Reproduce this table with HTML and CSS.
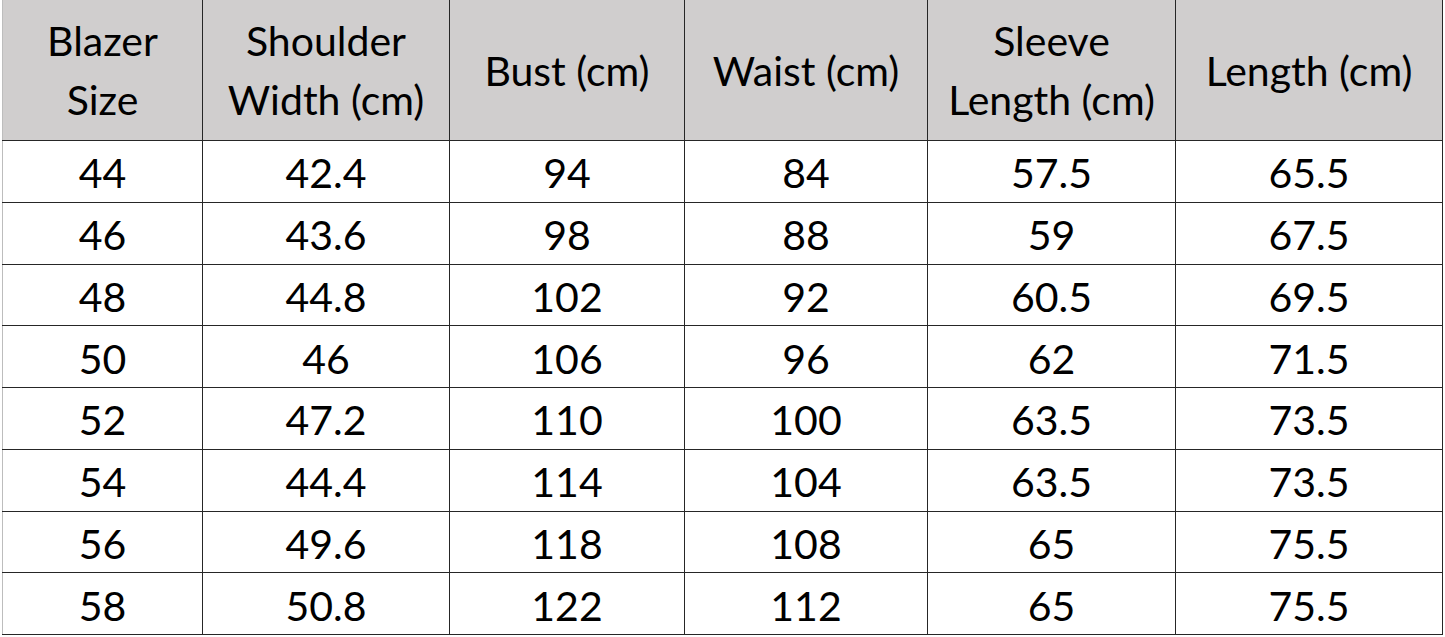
FILE: index.html
```html
<!DOCTYPE html>
<html>
<head>
<meta charset="utf-8">
<link rel="stylesheet" href="styles.css">
</head>
<body>
<table class="size-table">
  <colgroup>
    <col class="c1"><col class="c2"><col class="c3"><col class="c4"><col class="c5"><col class="c6">
  </colgroup>
  <thead>
    <tr>
      <th>Blazer<br>Size</th>
      <th>Shoulder<br>Width (cm)</th>
      <th>Bust (cm)</th>
      <th>Waist (cm)</th>
      <th>Sleeve<br>Length (cm)</th>
      <th>Length (cm)</th>
    </tr>
  </thead>
  <tbody>
    <tr><td>44</td><td>42.4</td><td>94</td><td>84</td><td>57.5</td><td>65.5</td></tr>
    <tr><td>46</td><td>43.6</td><td>98</td><td>88</td><td>59</td><td>67.5</td></tr>
    <tr><td>48</td><td>44.8</td><td>102</td><td>92</td><td>60.5</td><td>69.5</td></tr>
    <tr><td>50</td><td>46</td><td>106</td><td>96</td><td>62</td><td>71.5</td></tr>
    <tr><td>52</td><td>47.2</td><td>110</td><td>100</td><td>63.5</td><td>73.5</td></tr>
    <tr><td>54</td><td>44.4</td><td>114</td><td>104</td><td>63.5</td><td>73.5</td></tr>
    <tr><td>56</td><td>49.6</td><td>118</td><td>108</td><td>65</td><td>75.5</td></tr>
    <tr><td>58</td><td>50.8</td><td>122</td><td>112</td><td>65</td><td>75.5</td></tr>
  </tbody>
</table>
</body>
</html>
```
FILE: styles.css
```css
html, body {
  margin: 0;
  padding: 0;
  background: #ffffff;
}
body {
  padding-left: 2px;
}
.size-table {
  border-collapse: collapse;
  table-layout: fixed;
  width: 1440px;
  font-family: Lato, "Liberation Sans", sans-serif;
  font-size: 41px;
  color: #000;
  border-left: 1px solid #bdbdbd;
}
.c1 { width: 200px; }
.c2 { width: 247px; }
.c3 { width: 235px; }
.c4 { width: 243px; }
.c5 { width: 248px; }
.c6 { width: 267px; }
.size-table th,
.size-table td {
  border: 1px solid #262626;
  text-align: center;
  vertical-align: middle;
  padding: 0;
  font-weight: normal;
}
.size-table th {
  background: #d0cece;
  height: 140px;
  line-height: 59px;
  border-top: none;
  padding-top: 0;
}
.size-table th:first-child,
.size-table td:first-child {
  border-left: 1px solid #bdbdbd;
}
.size-table td {
  height: 56.75px;
  line-height: 46px;
  padding-top: 4px;
}
```
